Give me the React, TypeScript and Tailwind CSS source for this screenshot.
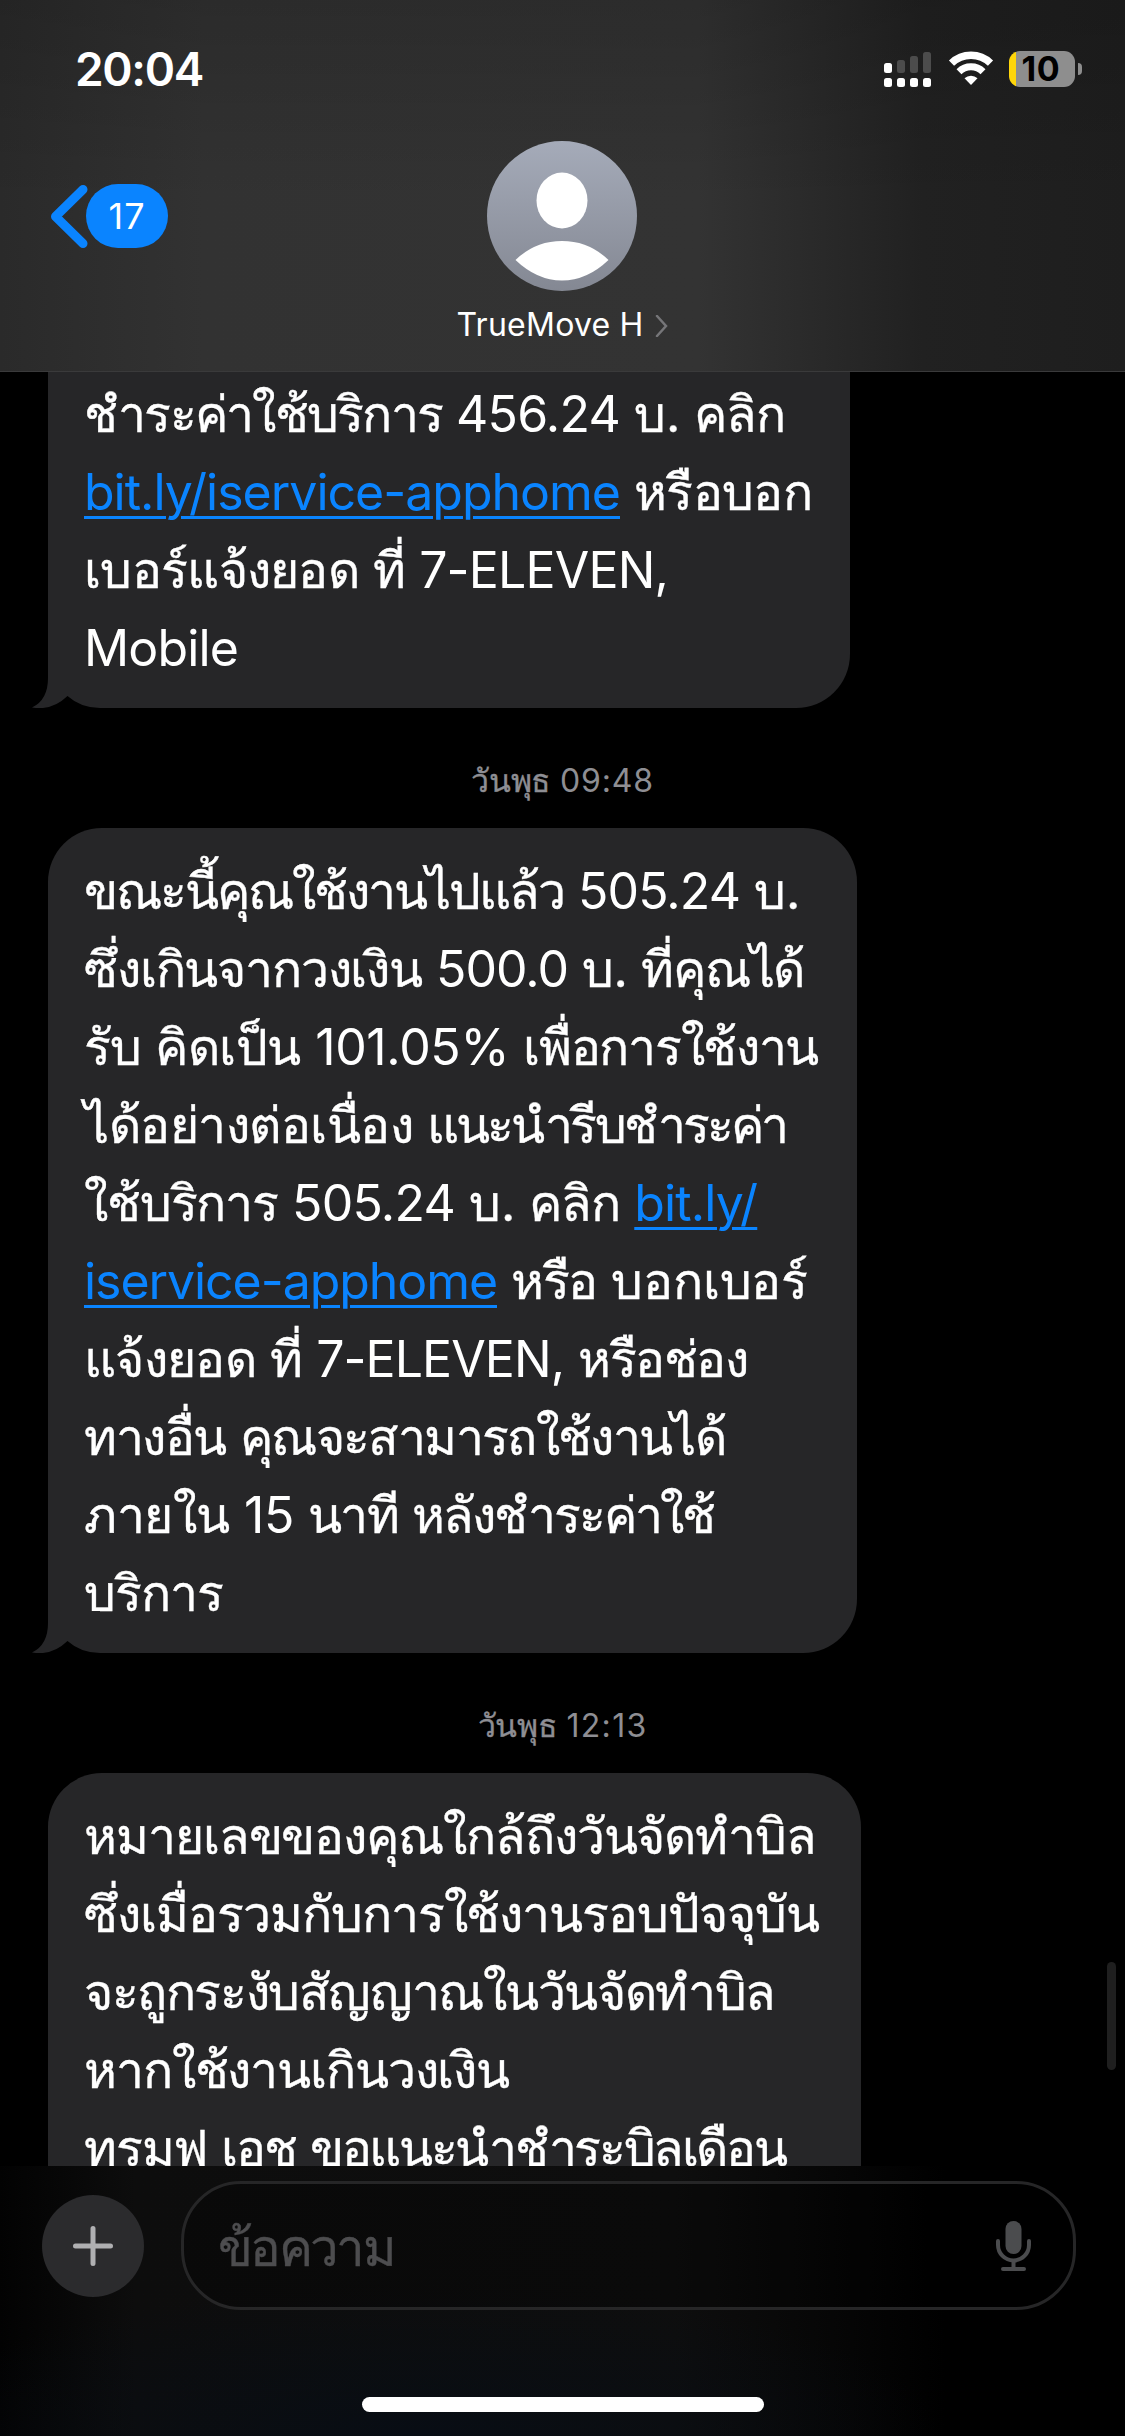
import React, { useLayoutEffect, useRef } from "react";

type Word = { text: string; width: number; link?: boolean };

const w = (text: string, width: number, link = false): Word => ({ text, width, link });

const messages: { time?: Word[]; box: string; tail: boolean; lines: Word[][] }[] = [
  {
    box: "w-[802px] pt-[3px] rounded-br-[54px]",
    tail: true,
    lines: [
      [w("ชำระค่าใช้บริการ", 358), w("456.24", 164), w("บ.", 46), w("คลิก", 91)],
      [w("bit.ly/iservice-apphome", 536, true), w("หรือบอก", 178)],
      [w("เบอร์แจ้งยอด", 275), w("ที่", 32), w("7-ELEVEN,", 249)],
      [w("Mobile", 154)],
    ],
  },
  {
    time: [w("วันพุธ", 80), w("09:48", 94)],
    box: "w-[809px] pt-6 rounded-t-[54px] rounded-br-[54px]",
    tail: true,
    lines: [
      [w("ขณะนี้คุณใช้งานไปแล้ว", 480), w("505.24", 162), w("บ.", 46)],
      [w("ซึ่งเกินจากวงเงิน", 338), w("500.0", 132), w("บ.", 45), w("ที่คุณได้", 163)],
      [w("รับ", 57), w("คิดเป็น", 146), w("101.05%", 194), w("เพื่อการใช้งาน", 295)],
      [w("ได้อย่างต่อเนื่อง", 329), w("แนะนำรีบชำระค่า", 359)],
      [w("ใช้บริการ", 194), w("505.24", 163), w("บ.", 46), w("คลิก", 91), w("bit.ly/", 123, true)],
      [w("iservice-apphome", 413, true), w("หรือ", 86), w("บอกเบอร์", 197)],
      [w("แจ้งยอด", 172), w("ที่", 32), w("7-ELEVEN,", 248), w("หรือช่อง", 169)],
      [w("ทางอื่น", 142), w("คุณจะสามารถใช้งานได้", 485)],
      [w("ภายใน", 146), w("15", 50), w("นาที", 90), w("หลังชำระค่าใช้", 302)],
      [w("บริการ", 139)],
    ],
  },
  {
    time: [w("วันพุธ", 80), w("12:13", 81)],
    box: "w-[813px] pt-6 rounded-t-[54px]",
    tail: false,
    lines: [
      [w("หมายเลขของคุณใกล้ถึงวันจัดทำบิล", 732)],
      [w("ซึ่งเมื่อรวมกับการใช้งานรอบปัจจุบัน", 735)],
      [w("จะถูกระงับสัญญาณในวันจัดทำบิล", 691)],
      [w("หากใช้งานเกินวงเงิน", 425)],
      [w("ทรมฟ", 123), w("เอช", 75), w("ขอแนะนำชำระบิลเดือน", 475)],
    ],
  },
];

// Spreads the letters so that the word takes exactly the given width.
function Fit({ text, width, link }: Word) {
  const ref = useRef<HTMLSpanElement>(null);
  const thai = /[\u0e00-\u0e7f]/.test(text);

  useLayoutEffect(() => {
    const el = ref.current!;
    el.style.letterSpacing = "0px";
    const base = el.getBoundingClientRect().width;
    el.style.letterSpacing = "1px";
    const step = el.getBoundingClientRect().width - base;
    el.style.letterSpacing = `${(width - base) / (step || 1)}px`;
  }, [text, width]);

  return (
    <span
      ref={ref}
      className={
        link
          ? "text-[#0a84ff] underline decoration-[3px] underline-offset-[6px]"
          : thai
            ? "[-webkit-text-stroke:0.35px_currentColor]"
            : ""
      }
    >
      {text}
    </span>
  );
}

function Line({ words }: { words: Word[] }) {
  return (
    <>
      {words.map((word, i) => (
        <React.Fragment key={i}>
          {i > 0 && " "}
          <Fit {...word} />
        </React.Fragment>
      ))}
    </>
  );
}

function StatusBar() {
  return (
    <div className="flex h-[138px] items-center justify-between pl-[75px] pr-[43px]">
      <span className="text-[46px] font-semibold leading-none text-white">
        <Fit text="20:04" width={128} />
      </span>
      <div className="flex items-center">
        <svg width="47" height="36" viewBox="0 0 47 36" fill="#fff">
          <rect x="0" y="12" width="8" height="10" rx="2.5" />
          <rect x="13" y="9" width="8" height="13" rx="2.5" fill="#4c4c4c" />
          <rect x="26" y="5" width="8" height="17" rx="2.5" fill="#4c4c4c" />
          <rect x="39" y="1" width="8" height="21" rx="2.5" fill="#4c4c4c" />
          <rect x="0" y="27" width="8" height="9" rx="2.5" />
          <rect x="13" y="27" width="8" height="9" rx="2.5" />
          <rect x="26" y="27" width="8" height="9" rx="2.5" />
          <rect x="39" y="27" width="8" height="9" rx="2.5" />
        </svg>
        <svg className="ml-[17px]" width="46" height="36" viewBox="0 0 46 36" fill="none">
          <path d="M3.5 12.2a28 28 0 0 1 39 0" stroke="#fff" strokeWidth="7.4" />
          <path d="M11 20.8a17 17 0 0 1 24 0" stroke="#fff" strokeWidth="7" />
          <path d="M16.5 27.3a9.6 9.6 0 0 1 13 0L23 34z" fill="#fff" />
        </svg>
        <div className="ml-[15px] flex h-9 w-[66px] items-center justify-center rounded-[11px] bg-[linear-gradient(90deg,#ffd60a_7px,#8e8e8e_7px)] pr-[2px] text-[34px] font-bold leading-9 text-black">
          <Fit text="10" width={39} />
        </div>
        <div className="ml-[3px] h-3 w-1 rounded-r-full bg-[#8e8e8e]" />
      </div>
    </div>
  );
}

function Header() {
  return (
    <header className="h-[372px] shrink-0 border-b border-[#3a3a3b] bg-[linear-gradient(180deg,rgba(0,0,0,0.14),transparent_55%),linear-gradient(90deg,#2a2a2a_0%,#323232_18%,#333333_62%,#2b2b2b_71%,#212121_82%,#1e1e1e_100%)]">
      <StatusBar />
      <div className="grid grid-cols-3 px-[50px]">
        <div className="flex pt-[46px]">
          <svg width="38" height="64" viewBox="0 0 38 64" fill="none">
            <path
              d="M33 5.500 5.500 32.500 33 59.500"
              stroke="#0a84ff"
              strokeWidth="9"
              strokeLinecap="round"
              strokeLinejoin="round"
            />
          </svg>
          <div className="-ml-[2px] flex h-16 w-[82px] items-center justify-center rounded-full bg-[#0a84ff] text-[36px] text-white">
            <Fit text="17" width={37} />
          </div>
        </div>
        <div className="flex flex-col items-center pt-[3px]">
          <svg width="150" height="150" viewBox="0 0 150 150">
            <defs>
              <linearGradient id="avatar" x1="0" y1="0" x2="0" y2="1">
                <stop offset="0" stopColor="#a5abb9" />
                <stop offset="1" stopColor="#848893" />
              </linearGradient>
            </defs>
            <circle cx="75" cy="75" r="75" fill="url(#avatar)" />
            <ellipse cx="75" cy="59.500" rx="25.500" ry="28" fill="#fff" />
            <path d="M28.500 119Q48 100 75 100t46.500 19Q100 139.500 75 139.500T28.500 119z" fill="#fff" />
          </svg>
          <div className="mt-3 flex h-11 items-center gap-[10px] text-[32px] leading-[44px] text-white">
            <span>
              <Fit text="TrueMove" width={154} /> <Fit text="H" width={26} />
            </span>
            <svg className="mt-[2px]" width="13" height="22" viewBox="0 0 13 22" fill="none">
              <path d="m2 1 9 10-9 10" stroke="#767679" strokeWidth="2.500" strokeLinecap="round" />
            </svg>
          </div>
        </div>
      </div>
    </header>
  );
}

function Composer() {
  return (
    <footer className="flex h-[270px] shrink-0 flex-col items-center bg-[radial-gradient(ellipse_520px_150px_at_420px_270px,#080d14,transparent),linear-gradient(90deg,#020202_0%,#0d0d0d_12%,#0e0e0e_60%,#060606_74%,#000_84%)]">
      <div className="flex w-full items-center pl-[42px] pt-[15px]">
        <div className="flex size-[102px] items-center justify-center rounded-full bg-[#2b2b2d]">
          <svg width="40" height="40" viewBox="0 0 40 40">
            <path d="M20 2.500v35M2.500 20h35" stroke="#b0b0b2" strokeWidth="5" strokeLinecap="round" />
          </svg>
        </div>
        <div className="ml-[37px] flex h-[129px] w-[895px] items-center justify-between rounded-[60px] border-[3px] border-[#262627] bg-black/25 pl-[34px] pr-[42px]">
          <span className="pt-[5px] text-[51px] text-[#4d4d4f]">
            <Fit text="ข้อความ" width={176} />
          </span>
          <svg width="35" height="50" viewBox="0 0 35 50" fill="none">
            <rect x="9.500" y="0" width="16" height="33" rx="8" fill="#4b4c4e" />
            <path
              d="M2 20v4a15.500 15.500 0 0 0 31 0v-4M17.500 40v8M7 48h21"
              stroke="#4b4c4e"
              strokeWidth="4"
              strokeLinecap="round"
            />
          </svg>
        </div>
      </div>
      <div className="mt-[87px] h-[15px] w-[402px] rounded-full bg-white" />
    </footer>
  );
}

export default function App() {
  return (
    <div className="flex h-[2436px] w-[1125px] flex-col overflow-hidden bg-black font-[Inter,'Liberation_Sans',sans-serif]">
      <Header />
      <main className="relative min-h-0 flex-1 overflow-hidden">
        {messages.map((message, i) => (
          <div key={i}>
            {message.time && (
              <p className="h-[120px] whitespace-nowrap pt-[60px] text-center text-[32px] leading-[26px] text-[#8e8e93]">
                <Line words={message.time} />
              </p>
            )}
            <div className={`relative ml-12 bg-[#262628] pb-[21px] pl-9 text-[50px] leading-[78px] text-white ${message.box}`}>
              {message.lines.map((words, j) => (
                <p key={j} className="h-[78px] whitespace-nowrap">
                  <Line words={words} />
                </p>
              ))}
              {message.tail && (
                <svg className="absolute -left-4 bottom-0" width="68" height="42" viewBox="0 0 68 42">
                  <path d="M0 0h68v42H0z" fill="#000" />
                  <path d="M16 0h52v42q-19 0-32.500-12Q20 45 0 41.500 16 34 16 12z" fill="#262628" />
                </svg>
              )}
            </div>
          </div>
        ))}
        <div className="absolute right-[9px] top-[1590px] h-[108px] w-[9px] rounded-full bg-[#1f1f1f]" />
      </main>
      <Composer />
    </div>
  );
}
